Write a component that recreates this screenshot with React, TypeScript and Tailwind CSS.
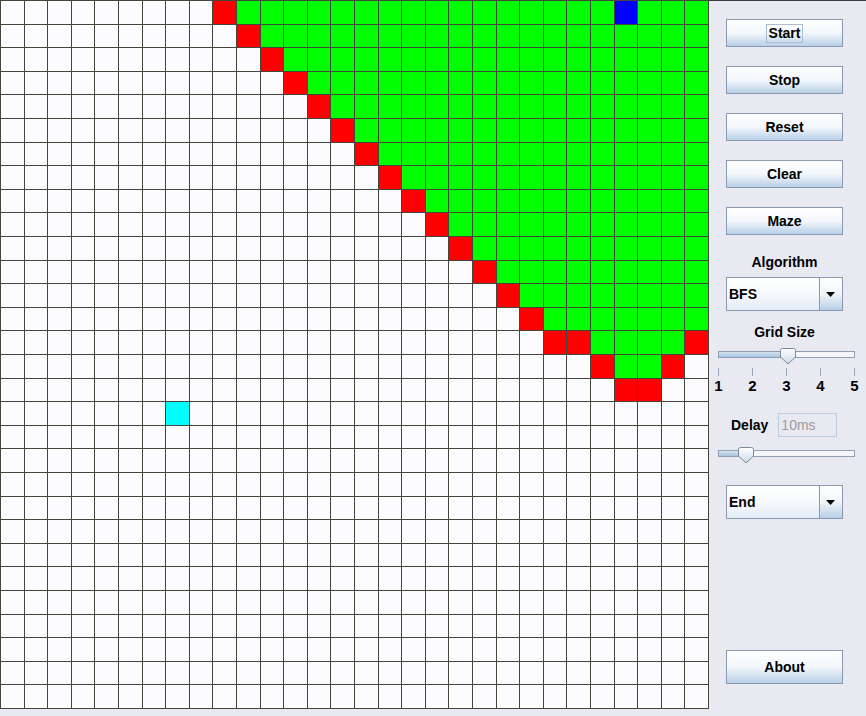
import React from "react";

const N = 30;

function cellColor(r: number, c: number): string {
  if (r === 17 && c === 7) return "bg-[#00ffff]";
  if (r === 0 && c === 26) return "bg-[#0000ff]";
  if (r <= 13) {
    if (c === 9 + r) return "bg-[#ff0000]";
    if (c > 9 + r) return "bg-[#00ff00]";
  }
  if (r === 14) {
    if (c === 23 || c === 24 || c === 29) return "bg-[#ff0000]";
    if (c >= 25 && c <= 28) return "bg-[#00ff00]";
  }
  if (r === 15) {
    if (c === 25 || c === 28) return "bg-[#ff0000]";
    if (c === 26 || c === 27) return "bg-[#00ff00]";
  }
  if (r === 16 && (c === 26 || c === 27)) return "bg-[#ff0000]";
  return "bg-[#fcfcfe]";
}

function Grid() {
  const cells = [];
  for (let r = 0; r < N; r++) {
    for (let c = 0; c < N; c++) {
      cells.push(<div key={`${r}-${c}`} className={`border-l border-t border-[#45453c] ${cellColor(r, c)}`} />);
    }
  }
  return (
    <div className="grid grid-cols-[repeat(30,minmax(0,1fr))] grid-rows-[repeat(30,minmax(0,1fr))] w-[709px] h-[709px] border-r border-b border-[#45453c] shrink-0">
      {cells}
    </div>
  );
}

function Button({ label, focused, tall }: { label: string; focused?: boolean; tall?: boolean }) {
  return (
    <div
      className={`ml-[17px] w-[117px] ${tall ? "h-[34px]" : "h-[28px]"} border border-[#8a99ad] bg-gradient-to-b from-white via-[#f3f7fb] to-[#b9d0e8] flex items-center justify-center`}
    >
      <span className={`px-[2px] leading-[17px] ${focused ? "outline outline-1 outline-[#a9bcd0]" : ""}`}>{label}</span>
    </div>
  );
}

function Combo({ value }: { value: string }) {
  return (
    <div className="ml-[17px] w-[117px] h-[34px] border border-[#8a99ad] flex">
      <div className="flex-1 flex items-center pl-[2px] bg-gradient-to-b from-white via-[#f7f9fc] to-[#e2ebf5] border-r border-[#8a99ad]">
        {value}
      </div>
      <div className="w-[22px] flex items-center justify-center bg-gradient-to-b from-white via-[#f0f5fa] to-[#b9d0e8]">
        <svg width="9" height="5" viewBox="0 0 9 5" className="-ml-[1px]">
          <path d="M0 0 H9 L4.5 5 Z" fill="#000" />
        </svg>
      </div>
    </div>
  );
}

function Thumb() {
  return (
    <svg width="18" height="18" viewBox="0 0 18 18">
      <defs>
        <linearGradient id="tg" x1="0" y1="0" x2="0" y2="1">
          <stop offset="0" stopColor="#ffffff" />
          <stop offset="1" stopColor="#c9d9ea" />
        </linearGradient>
      </defs>
      <path d="M1.5 3.5 Q1.5 1.5 3.5 1.5 H14.5 Q16.5 1.5 16.5 3.5 V10 L9 17 L1.5 10 Z" fill="url(#tg)" stroke="#7a8a99" />
    </svg>
  );
}

function Slider({ pos }: { pos: number }) {
  return (
    <div className="relative ml-[9px] w-[137px] h-[17px]">
      <div className="absolute left-0 right-0 top-[4px] h-[7px] border border-[#8fa0b5] bg-[#f5f7fa] flex">
        <div className="h-full bg-gradient-to-b from-[#d6e4f2] to-[#a9c3df]" style={{ width: pos + 8 }} />
      </div>
      <div className="absolute top-0" style={{ left: pos }}>
        <Thumb />
      </div>
    </div>
  );
}

export default function App() {
  return (
    <div className="w-[866px] h-[716px] flex bg-[#e9e9f1] text-[14px] font-bold text-black overflow-hidden" style={{ fontFamily: '"Liberation Sans", Arial, sans-serif' }}>
      <Grid />
      <div className="flex-1 flex flex-col border-t border-[#3a3a3a]">
        <div className="h-[18px]" />
        <Button label="Start" focused />
        <div className="h-[19px]" />
        <Button label="Stop" />
        <div className="h-[19px]" />
        <Button label="Reset" />
        <div className="h-[19px]" />
        <Button label="Clear" />
        <div className="h-[19px]" />
        <Button label="Maze" />

        <div className="mt-[20px] ml-[17px] w-[117px] text-center leading-[15px]">Algorithm</div>
        <div className="mt-[7px]">
          <Combo value="BFS" />
        </div>

        <div className="mt-[14px] ml-[17px] w-[117px] text-center leading-[15px]">Grid Size</div>
        <div className="mt-[7px]">
          <Slider pos={61} />
        </div>
        <div className="mt-[4px] ml-[9px] w-[137px] h-[8px] flex justify-between">
          {[0, 1, 2, 3, 4].map((i) => (
            <div key={i} className="w-px h-full bg-[#9aa6b4]" />
          ))}
        </div>
        <div className="mt-[2px] ml-[9px] w-[137px] flex justify-between text-[15px] leading-[16px]">
          {["1", "2", "3", "4", "5"].map((d) => (
            <div key={d} className="w-px flex justify-center">
              <span>{d}</span>
            </div>
          ))}
        </div>

        <div className="mt-[19px] flex items-center h-[24px]">
          <span className="ml-[22px] leading-[15px]">Delay</span>
          <div className="ml-[10px] w-[59px] h-[24px] border border-[#b8cde2] flex items-center pl-[2px] font-normal text-[#9a9a9a]">
            10ms
          </div>
        </div>
        <div className="mt-[9px]">
          <Slider pos={19} />
        </div>

        <div className="mt-[22px]">
          <Combo value="End" />
        </div>

        <div className="mt-[131px]">
          <Button label="About" tall />
        </div>
      </div>
    </div>
  );
}
